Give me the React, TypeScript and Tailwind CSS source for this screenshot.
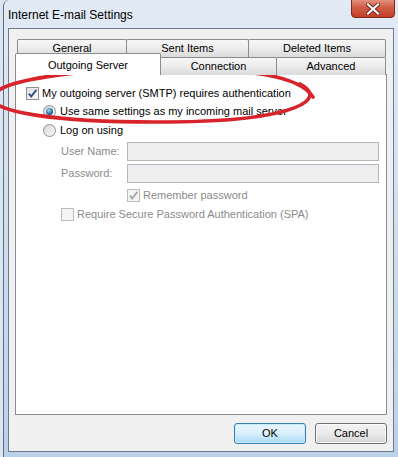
import React from "react";

const font = "font-['Liberation_Sans',Arial,sans-serif] text-[11px]";

function CheckBox({ checked, disabled }: { checked?: boolean; disabled?: boolean }) {
  return (
    <span
      className={`flex h-[13px] w-[13px] shrink-0 items-center justify-center border ${
        disabled ? "border-[#bcbcbc] bg-[#f4f4f4]" : "border-[#8e8f8f] bg-gradient-to-br from-[#dedede] to-[#fbfbfb]"
      }`}
    >
      {checked && (
        <svg width="11" height="11" viewBox="0 0 11 11">
          <path
            d="M1.8 5.6 L4.2 8.4 L9.4 1.8"
            fill="none"
            stroke={disabled ? "#a9a9a9" : "#3b5283"}
            strokeWidth="1.9"
          />
        </svg>
      )}
    </span>
  );
}

function Radio({ checked }: { checked?: boolean }) {
  return (
    <span className="flex h-[13px] w-[13px] shrink-0 items-center justify-center rounded-full border border-[#8e8f8f] bg-gradient-to-br from-[#d6d6d6] to-[#fafafa]">
      {checked && (
        <span className="h-[7px] w-[7px] rounded-full bg-[radial-gradient(circle_at_40%_35%,#9fdcf8,#2a6fa5_55%,#0c2f55)]" />
      )}
    </span>
  );
}

function Tab({ label, className }: { label: string; className: string }) {
  return (
    <div
      className={`flex items-center justify-center whitespace-nowrap rounded-t-[2px] border border-b-0 border-[#898c95] bg-gradient-to-b from-[#f7f7f7] via-[#ececec] to-[#dadada] text-black ${className}`}
    >
      {label}
    </div>
  );
}

export default function App() {
  return (
    <div className={`relative h-[457px] w-[398px] overflow-hidden bg-[#dbe6f3] ${font}`}>
      <div className="ml-[3px] flex h-[470px] w-[400px] flex-col rounded-tl-[6px] border-l border-[#5d6b7c] bg-gradient-to-b from-[#e2eaf5] via-[#cfdeef] to-[#b9d0ea]">
        {/* title bar */}
        <div className="flex h-[28px] items-start justify-between">
          <span className="pl-[4px] pt-[6px] text-[12px] text-black">Internet E-mail Settings</span>
          <div className="mr-[8px] -mt-[4px] flex h-[22px] w-[44px] items-center justify-center rounded-b-[4px] border border-[#7e2a1e] bg-gradient-to-b from-[#e9a593] via-[#d2604a] to-[#c43c22] pt-[3px]">
            <svg width="14" height="12" viewBox="0 0 14 12">
              <path d="M2 1.5 L12 10.5 M12 1.5 L2 10.5" stroke="#6b2015" strokeWidth="4" strokeLinecap="square" />
              <path d="M2 1.5 L12 10.5 M12 1.5 L2 10.5" stroke="#ffffff" strokeWidth="2.2" strokeLinecap="square" />
            </svg>
          </div>
        </div>

        {/* client area */}
        <div className="ml-[4px] flex h-[424px] w-[386px] flex-col border border-[#6e7a8a] bg-[#f0f0f0]">
          <div className="pl-[6px] pt-[10px]">
            <div className="ml-[2px] flex h-[18px]">
              <Tab label="General" className="w-[110px]" />
              <Tab label="Sent Items" className="-ml-px w-[123px]" />
              <Tab label="Deleted Items" className="-ml-px w-[138px]" />
            </div>
            <div className="relative z-10 -mb-px -mt-[4px] flex h-[22px] items-end">
              <div className="flex h-[22px] w-[146px] items-start justify-center whitespace-nowrap rounded-t-[2px] border border-b-0 border-[#898c95] bg-white pt-[3px]">
                Outgoing Server
              </div>
              <Tab label="Connection" className="-ml-px h-[18px] w-[117px]" />
              <Tab label="Advanced" className="-ml-px h-[18px] w-[110px]" />
            </div>
            <div className="flex h-[341px] w-[372px] flex-col border border-[#898c95] bg-white pt-[9px] text-black">
              <div className="flex h-[18px] items-center gap-[3px] pl-[10px]">
                <CheckBox checked />
                <span>My outgoing server (SMTP) requires authentication</span>
              </div>
              <div className="flex h-[19px] items-center gap-[4px] pl-[27px]">
                <Radio checked />
                <span>Use same settings as my incoming mail server</span>
              </div>
              <div className="flex h-[19px] items-center gap-[4px] pl-[27px]">
                <Radio />
                <span>Log on using</span>
              </div>
              <div className="mt-[2px] flex h-[19px] items-center pl-[45px] text-[#8b8b8b]">
                <span className="w-[66px] whitespace-nowrap">User Name:</span>
                <span className="h-[19px] w-[252px] border border-[#b3b7bd] bg-[#eeeeee]" />
              </div>
              <div className="mt-[3px] flex h-[19px] items-center pl-[45px] text-[#8b8b8b]">
                <span className="w-[66px] whitespace-nowrap">Password:</span>
                <span className="h-[19px] w-[252px] border border-[#b3b7bd] bg-[#eeeeee]" />
              </div>
              <div className="mt-[3px] flex h-[18px] items-center gap-[3px] pl-[111px] text-[#8b8b8b]">
                <CheckBox checked disabled />
                <span>Remember password</span>
              </div>
              <div className="mt-[1px] flex h-[18px] items-center gap-[3px] pl-[45px] text-[#8b8b8b]">
                <CheckBox disabled />
                <span>Require Secure Password Authentication (SPA)</span>
              </div>
            </div>
          </div>

          <div className="mt-[8px] flex justify-end gap-[9px] pr-[6px]">
            <button className="h-[21px] w-[72px] rounded-[3px] border border-[#3c7fb1] bg-gradient-to-b from-[#eaf6fd] via-[#d9f0fc] to-[#a7d9f5] text-black shadow-[inset_0_0_0_1px_#c8ecff]">
              OK
            </button>
            <button className="h-[21px] w-[72px] rounded-[3px] border border-[#707070] bg-gradient-to-b from-[#f2f2f2] via-[#ebebeb] to-[#d4d4d4] text-black shadow-[inset_0_0_0_1px_#fbfbfb]">
              Cancel
            </button>
          </div>
        </div>
      </div>

      {/* red hand-drawn markings */}
      <svg className="pointer-events-none absolute left-0 top-0" width="398" height="457" viewBox="0 0 398 457">
        <ellipse cx="86" cy="64" rx="52" ry="8.5" fill="none" stroke="#d9232b" strokeWidth="3.2" />
        <path
          d="M300 84 C328 98 300 121 170 122 C60 123 -20 112 -6 94 C6 80 70 70 160 69 C250 68 300 76 313 97"
          fill="none"
          stroke="#d9232b"
          strokeWidth="3.6"
          strokeLinecap="round"
        />
      </svg>
    </div>
  );
}
